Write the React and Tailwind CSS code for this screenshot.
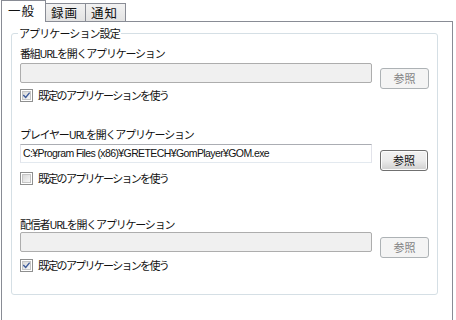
import React from 'react';

const jp = "font-['Noto_Sans_CJK_JP','Noto_Sans',sans-serif]";

const Checkbox = ({ checked }) => (
  <div className="w-[13px] h-[13px] border border-[#8e8f8f] bg-white p-px shrink-0">
    <div className="w-full h-full border border-[#c5c5c5] bg-gradient-to-br from-[#d9d9d9] to-[#f7f7f7] flex items-center justify-center">
      {checked && (
        <svg width="9" height="9" viewBox="0 0 9 9" className="-mt-px">
          <path d="M1 4.5 L3.5 7 L8 1.5" fill="none" stroke="#3c5a9a" strokeWidth="1.8" strokeLinecap="square" />
        </svg>
      )}
    </div>
  </div>
);

const Browse = ({ enabled }) =>
  enabled ? (
    <button className="w-[48px] h-[21px] rounded-[3px] border border-[#707070] bg-gradient-to-b from-[#f2f2f2] via-[#ebebeb] to-[#cfcfcf] text-[11px] leading-[19px] text-[#111] shadow-[inset_0_0_0_1px_#fcfcfc]">
      参照
    </button>
  ) : (
    <button className="w-[49px] h-[21px] rounded-[3px] border border-[#adb2b5] bg-[#f4f4f4] text-[11px] leading-[19px] text-[#838383]">
      参照
    </button>
  );

const Section = ({ label, value, enabled, checked, labelMt, boxMt, boxH, btnMt, cbMt }) => (
  <div>
    <div className={`text-[11px] leading-[12px] tracking-[-1.2px] text-[#111] ${labelMt}`}>{label}</div>
    <div className={`flex items-start ${boxMt}`}>
      {enabled ? (
        <div className={`w-[352px] ${boxH} border border-[#abadb3] border-l-[#e2e3ea] border-r-[#e2e3ea] border-b-[#e3e9ef] bg-white pl-[2px] font-['Liberation_Sans',sans-serif] text-[10.5px] leading-[17px] tracking-[-0.6px] text-[#111] whitespace-nowrap overflow-hidden`}>
          {value}
        </div>
      ) : (
        <div className={`w-[352px] ${boxH} rounded-[2px] border border-[#adadad] bg-[#f0f0f0]`} />
      )}
      <div className={`ml-[8px] ${btnMt}`}>
        <Browse enabled={enabled} />
      </div>
    </div>
    <div className={`flex items-center gap-[5px] ${cbMt}`}>
      <Checkbox checked={checked} />
      <span className="text-[11px] leading-[13px] tracking-[-1.7px] text-[#111]">既定のアプリケーションを使う</span>
    </div>
  </div>
);

export default function App() {
  return (
    <div className={`w-[456px] h-[320px] bg-white ${jp} overflow-hidden`}>
      <div className="flex items-end h-[21px] pl-px">
        <div className="relative z-10 -mb-px h-[22px] w-[45px] border border-b-0 border-[#898c95] bg-white text-[12.5px] leading-[20px] pl-[6px] tracking-[1px] text-[#111]">
          一般
        </div>
        <div className="h-[18px] w-[41px] -ml-px border border-b-0 border-[#898c95] bg-gradient-to-b from-[#f2f2f2] to-[#e3e3e3] text-[12.5px] leading-[17px] pl-[5px] tracking-[1px] text-[#111]">
          録画
        </div>
        <div className="h-[18px] w-[41px] -ml-px border border-b-0 border-[#898c95] bg-gradient-to-b from-[#f2f2f2] to-[#e3e3e3] text-[12.5px] leading-[17px] pl-[5px] tracking-[1px] text-[#111]">
          通知
        </div>
      </div>
      <div className="ml-px w-[452px] h-[299px] border border-b-0 border-[#898c95] pt-[5px]">
        <fieldset className="ml-[9px] w-[425px] h-[268px] border border-[#d5dfe5] rounded-[3px] px-[8px]">
          <legend className="-ml-[2px] px-px text-[11px] leading-[12px] tracking-[-0.9px] text-[#111]">
            アプリケーション設定
          </legend>
          <Section
            label="番組URLを開くアプリケーション"
            enabled={false}
            checked
            labelMt="mt-[8px]"
            boxMt="mt-[4px]"
            boxH="h-[20px]"
            btnMt="mt-px"
            cbMt="mt-0"
          />
          <Section
            label="プレイヤーURLを開くアプリケーション"
            value="C:¥Program Files (x86)¥GRETECH¥GomPlayer¥GOM.exe"
            enabled
            checked={false}
            labelMt="mt-[26px]"
            boxMt="mt-[4px]"
            boxH="h-[19px]"
            btnMt="mt-[2px]"
            cbMt="mt-px"
          />
          <Section
            label="配信者URLを開くアプリケーション"
            enabled={false}
            checked
            labelMt="mt-[33px]"
            boxMt="mt-[2px]"
            boxH="h-[20px]"
            btnMt="mt-px"
            cbMt="mt-px"
          />
        </fieldset>
      </div>
    </div>
  );
}
